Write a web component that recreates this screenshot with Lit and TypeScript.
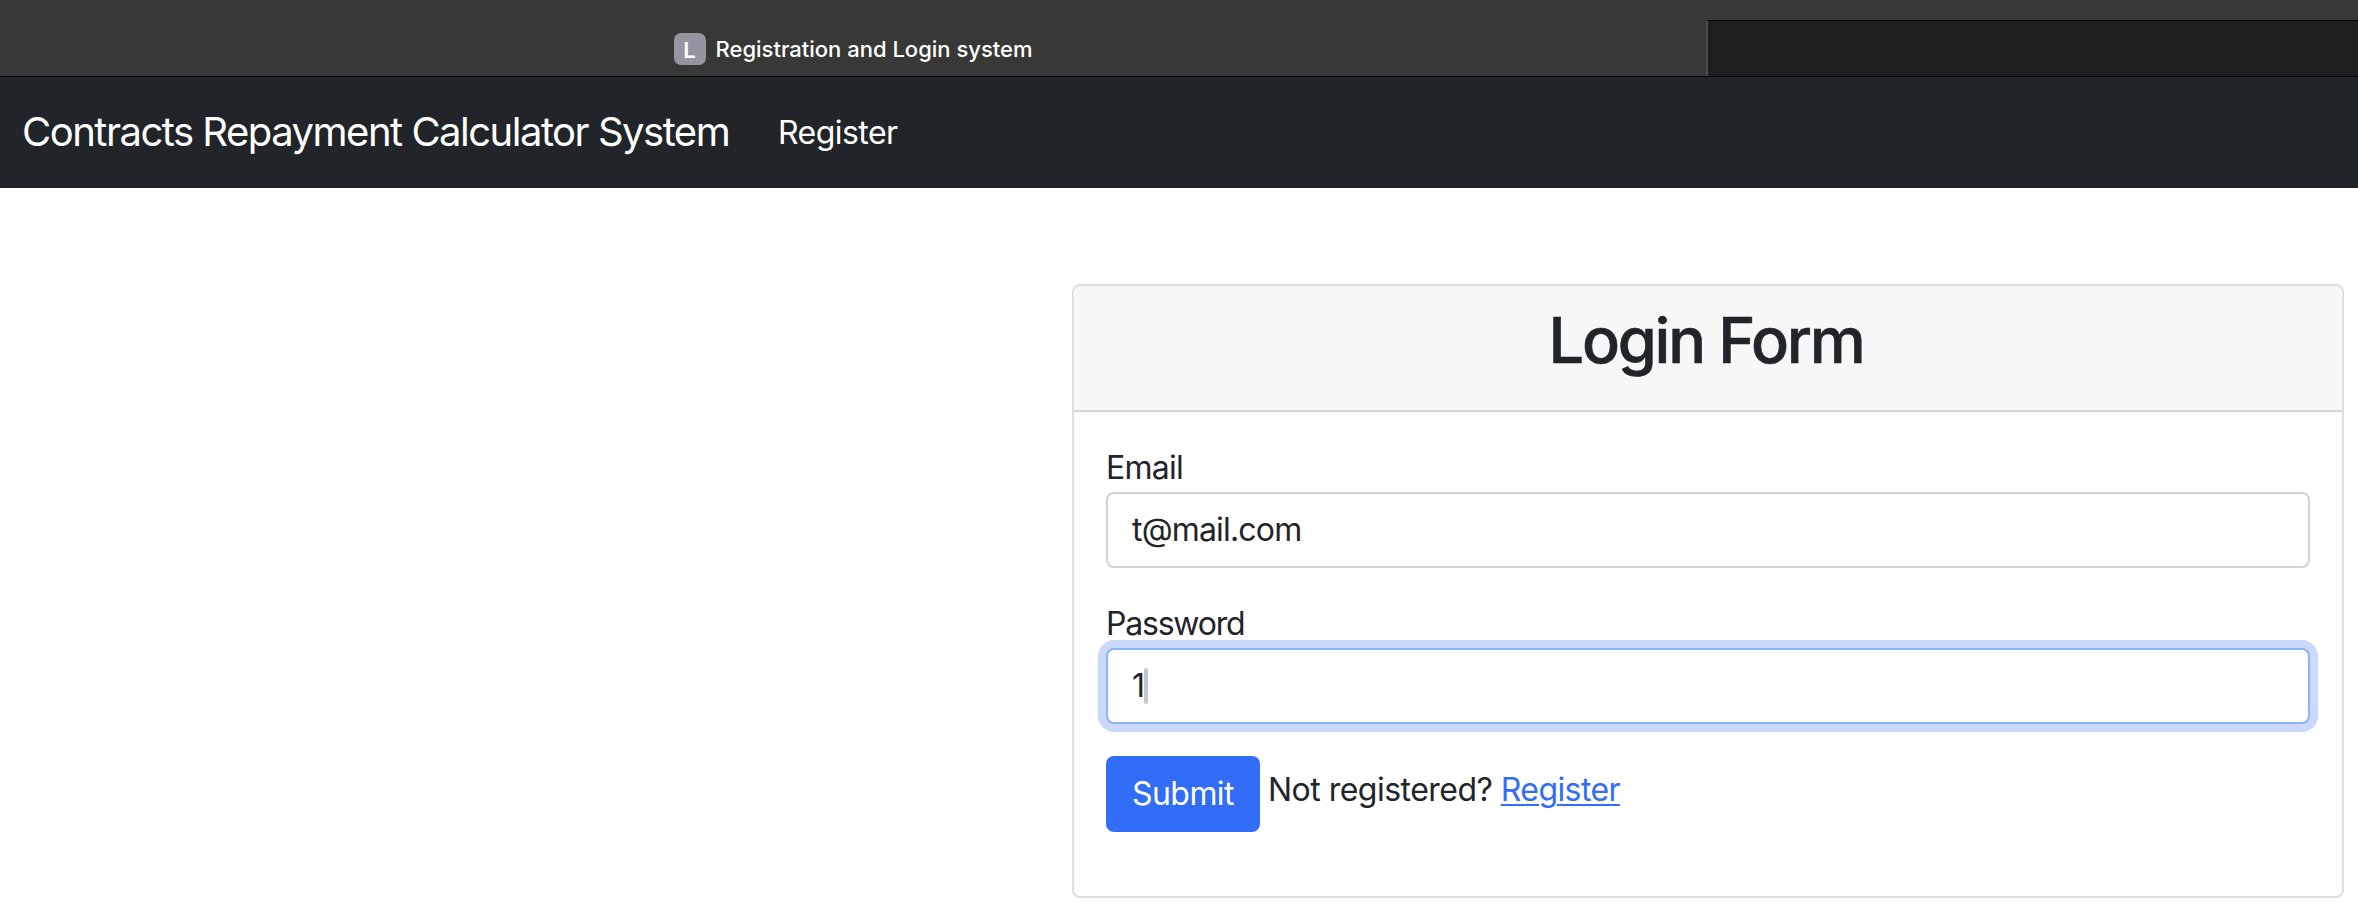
import { LitElement, html, css } from "lit";
import { customElement, property } from "lit/decorators.js";

@customElement("browser-tabs")
class BrowserTabs extends LitElement {
  static styles = css`
    :host {
      display: flex;
      height: 77px;
      box-sizing: border-box;
      background: #383836;
      border-bottom: 1px solid #000;
    }
    .active {
      box-sizing: border-box;
      width: 1706px;
      padding-top: 22px;
      display: flex;
      align-items: center;
      justify-content: center;
      gap: 10px;
      color: #fff;
      font-size: 22px;
      font-weight: 500;
      line-height: 32px;
      white-space: nowrap;
    }
    .badge {
      width: 32px;
      height: 32px;
      border-radius: 7px;
      background: #9595a1;
      text-align: center;
      font-weight: 600;
      line-height: 34px;
    }
    .rest {
      flex: 1;
      box-sizing: border-box;
      margin-top: 20px;
      border-top: 1px solid #000;
      border-left: 2px solid #4c4c4a;
      background: #1e1e1e;
    }
  `;
  render() {
    return html`
      <div class="active"><span class="badge">L</span><span>Registration and Login system</span></div>
      <div class="rest"></div>
    `;
  }
}

@customElement("nav-bar")
class NavBar extends LitElement {
  static styles = css`
    :host {
      display: flex;
      align-items: center;
      height: 111px;
      box-sizing: border-box;
      padding-left: 22px;
      background: #212529;
      color: #fff;
      white-space: nowrap;
    }
    .brand {
      width: 756px;
      font-size: 40px;
      line-height: 60px;
      letter-spacing: -1.5px;
      padding-bottom: 2px;
    }
    .link {
      font-size: 32px;
      line-height: 48px;
      letter-spacing: -0.55px;
    }
  `;
  render() {
    return html`
      <span class="brand">Contracts Repayment Calculator System</span>
      <span class="link">Register</span>
    `;
  }
}

@customElement("form-field")
class FormField extends LitElement {
  @property() label = "";
  @property() value = "";
  @property({ type: Boolean, reflect: true }) active = false;

  static styles = css`
    :host {
      display: block;
      margin-bottom: 32px;
      font-size: 32px;
      line-height: 48px;
    }
    .label {
      letter-spacing: -0.75px;
    }
    :host([active]) .label {
      letter-spacing: -1.21px;
    }
    .control {
      display: flex;
      align-items: center;
      box-sizing: border-box;
      height: 76px;
      padding: 0 24px;
      border: 2px solid #ced4da;
      border-radius: 8px;
      background: #fff;
      letter-spacing: -0.82px;
    }
    :host([active]) .control {
      border-color: #8bb4f9;
      box-shadow: 0 0 0 8px #cbd9fc;
    }
    .caret {
      width: 4px;
      height: 36px;
      border-radius: 2px;
      background: #c6c6c8;
    }
  `;
  render() {
    return html`
      <div class="label">${this.label}</div>
      <div class="control">
        <span>${this.value}</span>${this.active ? html`<span class="caret"></span>` : null}
      </div>
    `;
  }
}

@customElement("app-root")
class AppRoot extends LitElement {
  static styles = css`
    :host {
      display: block;
      height: 906px;
      overflow: hidden;
      background: #fff;
      color: #212529;
      font-family: Inter, "Liberation Sans", sans-serif;
    }
    .card {
      box-sizing: border-box;
      width: 1272px;
      height: 614px;
      margin: 96px 14px 0 auto;
      border: 2px solid #dfdfdf;
      border-radius: 8px;
      background: #fff;
    }
    .header {
      box-sizing: border-box;
      height: 126px;
      padding: 16px 4px 0 0;
      border-bottom: 2px solid #d7d7d7;
      border-radius: 6px 6px 0 0;
      background: #f7f7f7;
    }
    .title {
      margin: 0;
      text-align: center;
      font-size: 63px;
      font-weight: 500;
      line-height: 77px;
      letter-spacing: -2.25px;
      -webkit-text-stroke: 0.6px #212529;
    }
    .body {
      padding: 32px;
    }
    .actions {
      display: flex;
      align-items: flex-start;
      font-size: 32px;
      line-height: 48px;
      white-space: nowrap;
    }
    .submit {
      box-sizing: border-box;
      width: 154px;
      height: 76px;
      padding: 14px 0;
      border: 0;
      border-radius: 8px;
      background: #316df6;
      color: #fff;
      font: inherit;
      letter-spacing: -0.57px;
    }
    .hint {
      padding: 10px 0 0 8px;
      letter-spacing: -0.52px;
    }
    .link {
      color: #316df6;
      letter-spacing: -0.6px;
      text-decoration: underline;
      text-decoration-thickness: 2px;
      text-underline-offset: 3px;
    }
  `;
  render() {
    return html`
      <browser-tabs></browser-tabs>
      <nav-bar></nav-bar>
      <div class="card">
        <div class="header"><h2 class="title">Login Form</h2></div>
        <div class="body">
          <form-field label="Email" value="t@mail.com"></form-field>
          <form-field label="Password" value="1" active></form-field>
          <div class="actions">
            <button class="submit">Submit</button>
            <span class="hint">Not registered? <a class="link">Register</a></span>
          </div>
        </div>
      </div>
    `;
  }
}
